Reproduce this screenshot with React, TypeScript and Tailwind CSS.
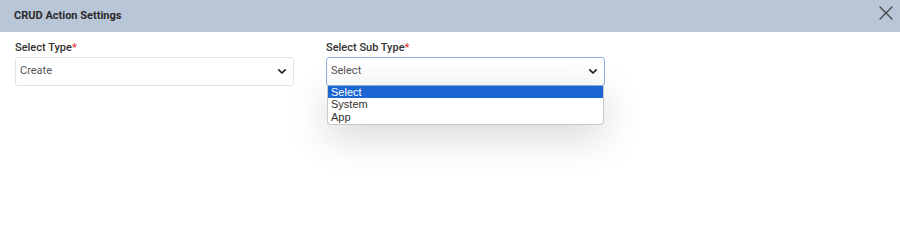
function Chevron() {
  return (
    <svg width="10" height="7" viewBox="0 0 10 7" className="shrink-0">
      <path d="M1.8 1.8 L5 5 L8.2 1.8" fill="none" stroke="#222" strokeWidth="1.7" strokeLinecap="round" strokeLinejoin="round" />
    </svg>
  );
}

function Field({ label, value, focused, children }: { label: string; value: string; focused?: boolean; children?: React.ReactNode }) {
  return (
    <div className="relative w-[279px]">
      <div className="text-[11px] leading-[14px] font-medium text-[#333]">
        {label}
        <span className="text-[#e53935]">*</span>
      </div>
      <div
        className={
          focused
            ? "mt-[2px] h-[29px] flex items-center justify-between pl-[4px] pr-[6px] rounded-[3px] border border-[#8fb1e8] bg-white"
            : "mt-[2px] h-[29px] flex items-center justify-between pl-[4px] pr-[6px] rounded-[3px] border border-[#e2e2e2] bg-white"
        }
      >
        <span className="text-[11px] text-[#555]">{value}</span>
        <Chevron />
      </div>
      {children}
    </div>
  );
}

export default function App() {
  return (
    <div className="w-[900px] h-[244px] bg-white font-['Roboto',sans-serif]">
      <div className="h-8 bg-[#b9c6d7] flex items-center justify-between pl-[14px] pr-[7px]">
        <span className="text-[11px] font-bold text-[#2b2b2b]">CRUD Action Settings</span>
        <svg width="14" height="14" viewBox="0 0 14 14" className="mb-[6px]">
          <path d="M1 1 L13 13 M13 1 L1 13" stroke="#444" strokeWidth="1.3" strokeLinecap="round" />
        </svg>
      </div>
      <div className="flex gap-[32px] pl-[15px] pt-[9px]">
        <Field label="Select Type" value="Create" />
        <Field label="Select Sub Type" value="Select" focused>
          <div className="absolute left-[1px] right-[1px] top-[45px] bg-white border border-t-0 border-[#c8c8c8] rounded-b-[4px] shadow-[0_10px_40px_rgba(0,0,0,0.18)] overflow-hidden font-['Liberation_Sans',sans-serif] text-[11px] text-[#333]">
            <div className="h-[12px] leading-[12px] bg-[#1c66d4] text-white pl-[3px]">Select</div>
            <div className="h-[13px] leading-[13px] pl-[3px]">System</div>
            <div className="h-[13px] leading-[13px] pl-[3px]">App</div>
          </div>
        </Field>
      </div>
    </div>
  );
}
